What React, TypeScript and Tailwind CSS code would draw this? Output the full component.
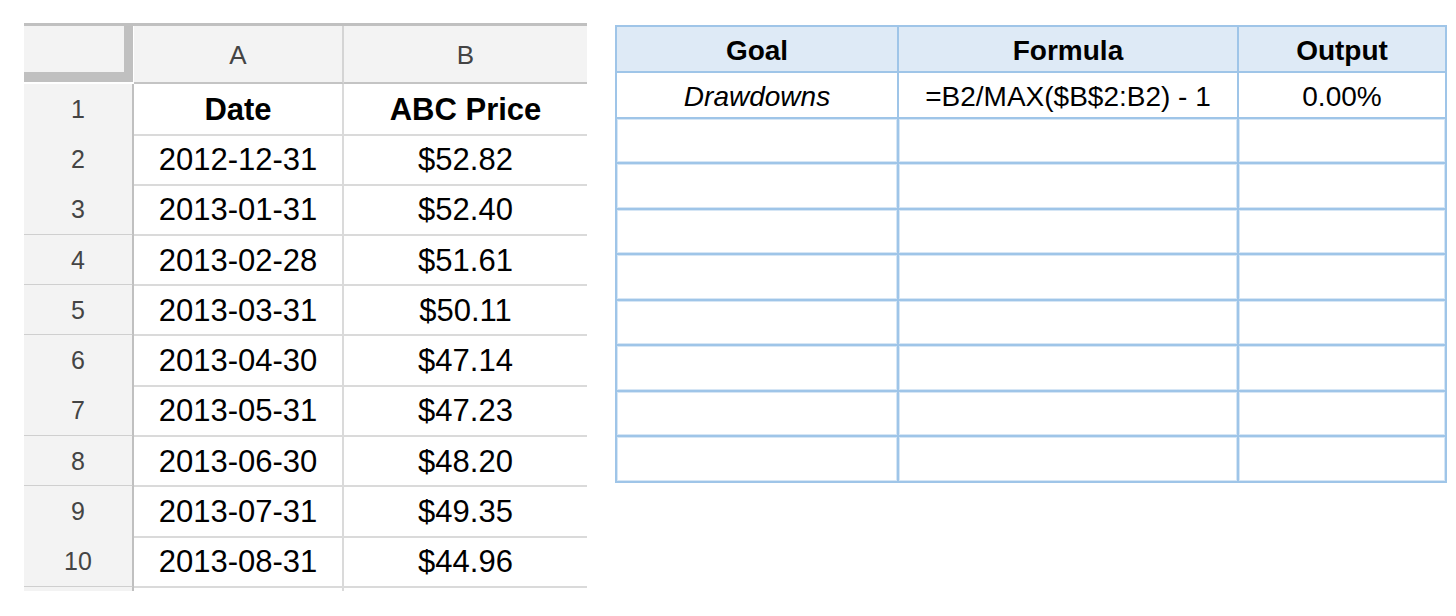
const rows: [string, string][] = [
  ["2012-12-31", "$52.82"],
  ["2013-01-31", "$52.40"],
  ["2013-02-28", "$51.61"],
  ["2013-03-31", "$50.11"],
  ["2013-04-30", "$47.14"],
  ["2013-05-31", "$47.23"],
  ["2013-06-30", "$48.20"],
  ["2013-07-31", "$49.35"],
  ["2013-08-31", "$44.96"],
];

const font = { fontFamily: '"Liberation Sans", Arial, sans-serif' };

const Sheet = () => {
  return (
    <div className="w-[563px] border-t-[3px] border-[#c0c0c0]">
      {/* column headers */}
      <div className="grid grid-cols-[110px_210px_243px] h-[58px]">
        <div className="bg-white">
          <div className="h-[56px] bg-[#f3f3f3] border-r-[9px] border-b-[10px] border-[#c0c0c0] mr-[1px]" />
        </div>
        <div className="bg-[#f3f3f3] border-b-2 border-[#c4c4c4] border-r-2 border-r-[#d4d4d4] flex items-center justify-center pt-[2px] text-[26px] text-[#444]">
          A
        </div>
        <div className="bg-[#f3f3f3] border-b-2 border-[#c4c4c4] flex items-center justify-center pt-[2px] text-[26px] text-[#444]">
          B
        </div>
      </div>
      {/* header row 1 */}
      <div className="grid grid-cols-[110px_210px_243px] h-[50px]">
        <div className="bg-[#f3f3f3] border-r-2 border-r-[#c0c0c0] border-b-2 border-b-[#cfcfcf] flex items-center justify-center pt-[2px] text-[25px] text-[#444]">
          1
        </div>
        <div className="border-r-2 border-r-[#dadada] border-b-2 border-b-[#dadada] flex items-center justify-center pt-[3px] text-[31px] font-bold text-black">
          Date
        </div>
        <div className="border-b-2 border-b-[#dadada] flex items-center justify-center pt-[3px] text-[31px] font-bold text-black">
          ABC Price
        </div>
      </div>
      {rows.map(([date, price], i) => (
        <div key={date} className="grid grid-cols-[110px_210px_243px] h-[50.3px]">
          <div className="bg-[#f3f3f3] border-r-2 border-r-[#c0c0c0] border-b-2 border-b-[#cfcfcf] flex items-center justify-center pt-[2px] text-[25px] text-[#444]">
            {i + 2}
          </div>
          <div className="border-r-2 border-r-[#dadada] border-b-2 border-b-[#dadada] flex items-center justify-center pt-[3px] text-[31px] text-black">
            {date}
          </div>
          <div className="border-b-2 border-b-[#dadada] flex items-center justify-center pt-[3px] text-[31px] text-black">
            {price}
          </div>
        </div>
      ))}
      <div className="grid grid-cols-[110px_210px_243px] h-[4px]">
        <div className="bg-[#f3f3f3] border-r-2 border-r-[#c0c0c0]" />
        <div className="border-r-2 border-r-[#dadada]" />
        <div />
      </div>
    </div>
  );
};

const GoalTable = () => {
  const empty = Array.from({ length: 8 });
  return (
    <div className="mt-[2px] w-[832px] bg-[#9fc5e8] p-[2px] grid grid-cols-[280px_338px_206px] gap-[2px] text-[28px] text-black">
      <div className="h-[44px] bg-[#deeaf6] flex items-center justify-center pt-[3px] font-bold">Goal</div>
      <div className="h-[44px] bg-[#deeaf6] flex items-center justify-center pt-[3px] font-bold">Formula</div>
      <div className="h-[44px] bg-[#deeaf6] flex items-center justify-center pt-[3px] font-bold">Output</div>

      <div className="h-[43.5px] bg-white flex items-center justify-center pt-[4px] italic">Drawdowns</div>
      <div className="h-[43.5px] bg-white flex items-center justify-center pt-[4px]">=B2/MAX($B$2:B2) - 1</div>
      <div className="h-[43.5px] bg-white flex items-center justify-center pt-[4px]">0.00%</div>

      {empty.map((_, i) => (
        <div key={i} className="contents">
          <div className="h-[43.5px] bg-white border border-[#d6e6f5]" />
          <div className="h-[43.5px] bg-white border border-[#d6e6f5]" />
          <div className="h-[43.5px] bg-white border border-[#d6e6f5]" />
        </div>
      ))}
    </div>
  );
};

export default function App() {
  return (
    <div className="w-[1456px] h-[616px] overflow-hidden bg-white pt-[23px] pl-[24px] flex items-start gap-[28px]" style={font}>
      <Sheet />
      <GoalTable />
    </div>
  );
}
